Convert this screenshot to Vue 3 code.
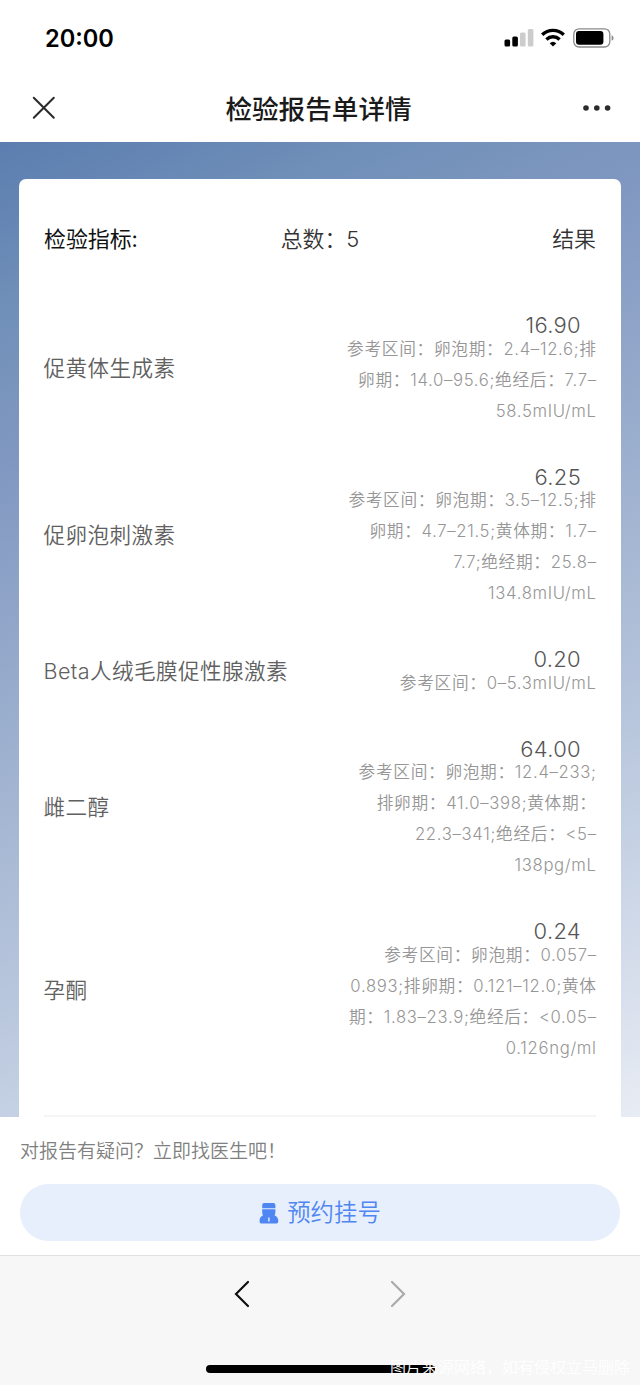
<template>
  <div class="page">
    <header class="status-bar">
      <span class="time">20:00</span>
      <div class="status-icons">
        <svg width="30" height="20" viewBox="0 0 30 20">
          <rect x="0.5" y="11.5" width="5.6" height="7" rx="1.5" fill="#000" />
          <rect x="8.3" y="8.5" width="5.6" height="10" rx="1.5" fill="#000" />
          <rect x="16" y="4.6" width="5.6" height="13.9" rx="1.5" fill="#ccc" />
          <rect x="23.8" y="1" width="5.6" height="17.5" rx="1.5" fill="#ccc" />
        </svg>
        <svg width="26" height="20" viewBox="0 0 26 20" class="wifi">
          <path d="M2.2 6.7a15.6 15.6 0 0 1 21.6 0" />
          <path d="M6.4 11.4a9.6 9.6 0 0 1 13.2 0" />
          <path d="M13 18.6l-3.3-3.3a4.8 4.8 0 0 1 6.6 0z" class="wifi-dot" />
        </svg>
        <svg width="42" height="20" viewBox="0 0 42 20">
          <rect x="0.8" y="0.8" width="36" height="18.2" rx="5.2" fill="none" stroke="#8a8a8a" stroke-width="1.3" />
          <rect x="3" y="3" width="27.4" height="13.8" rx="3" fill="#000" />
          <path d="M38.6 7.2c2.6 1 2.6 4.6 0 5.6z" fill="#8a8a8a" />
        </svg>
      </div>
    </header>

    <nav class="nav-bar">
      <svg width="24" height="24" viewBox="0 0 24 24" class="close">
        <path d="M1.8 1.8l20 20M21.8 1.8l-20 20" />
      </svg>
      <h1>检验报告单详情</h1>
      <svg width="28" height="6" viewBox="0 0 28 6" fill="#2c2c2c">
        <circle cx="3" cy="3" r="2.8" />
        <circle cx="13.8" cy="3" r="2.8" />
        <circle cx="24.6" cy="3" r="2.8" />
      </svg>
    </nav>

    <main class="content">
      <section class="card">
        <div class="card-head">
          <span class="head-title">检验指标:</span>
          <span class="head-count">总数：5</span>
          <span class="head-result">结果</span>
        </div>
        <ul class="list">
          <li v-for="item in items" :key="item.name" class="row">
            <span class="name">{{ item.name }}</span>
            <div class="result">
              <span class="value">{{ item.value }}</span>
              <p v-for="line in item.range" :key="line" class="range">{{ line }}</p>
            </div>
          </li>
        </ul>
      </section>
    </main>

    <section class="ask">
      <p>对报告有疑问？立即找医生吧！</p>
      <button class="book">
        <svg width="20" height="22" viewBox="0 0 20 22" fill="#4f86f2">
          <path d="M3.2 6.2V3q0-2 2-2h9.2q2 0 2 2v3.2z" />
          <path d="M3.2 7.2h13.200v2.600q0 2.200-.8 3.600 3.600 1.400 3.600 4.800v1.600q0 1.600-1.600 1.600H2.200q-1.600 0-1.600-1.600v-1.600q0-3.400 3.400-4.800Q3.200 12 3.200 9.800z" />
          <path d="M9.200 15.4h1.400v4H9.200z" fill="#e7effd" />
        </svg>
        <span>预约挂号</span>
      </button>
    </section>

    <footer class="toolbar">
      <div class="arrows">
        <svg width="16" height="28" viewBox="0 0 16 28" stroke="#111">
          <path d="M14 2L2 14l12 12" />
        </svg>
        <svg width="16" height="28" viewBox="0 0 16 28" stroke="#aaa">
          <path d="M2 2l12 12L2 26" />
        </svg>
      </div>
      <div class="home-indicator"></div>
      <span class="watermark">图片来源网络，如有侵权立马删除</span>
    </footer>
  </div>
</template>

<script setup>
const items = [
  {
    name: '促黄体生成素',
    value: '16.90',
    range: ['参考区间：卵泡期：2.4–12.6;排', '卵期：14.0–95.6;绝经后：7.7–', '58.5mIU/mL'],
  },
  {
    name: '促卵泡刺激素',
    value: '6.25',
    range: ['参考区间：卵泡期：3.5–12.5;排', '卵期：4.7–21.5;黄体期：1.7–', '7.7;绝经期：25.8–', '134.8mIU/mL'],
  },
  {
    name: 'Beta人绒毛膜促性腺激素',
    value: '0.20',
    range: ['参考区间：0–5.3mIU/mL'],
  },
  {
    name: '雌二醇',
    value: '64.00',
    range: ['参考区间：卵泡期：12.4–233;', '排卵期：41.0–398;黄体期：', '22.3–341;绝经后：<5–', '138pg/mL'],
  },
  {
    name: '孕酮',
    value: '0.24',
    range: ['参考区间：卵泡期：0.057–', '0.893;排卵期：0.121–12.0;黄体', '期：1.83–23.9;绝经后：<0.05–', '0.126ng/ml'],
  },
];
</script>

<style>
body {
  margin: 0;
}
</style>

<style scoped>
.page {
  width: 640px;
  height: 1385px;
  display: flex;
  flex-direction: column;
  overflow: hidden;
  background: #fff;
  font-family: Inter, "Noto Sans CJK SC", sans-serif;
  font-weight: 350;
}

p,
h1,
ul {
  margin: 0;
  padding: 0;
}

svg {
  display: block;
  flex: none;
}

.status-bar {
  height: 76px;
  padding: 0 25.5px 0 45px;
  box-sizing: border-box;
  display: flex;
  align-items: center;
  justify-content: space-between;
}

.time {
  font-size: 23.6px;
  font-weight: 600;
}

.status-icons {
  display: flex;
  align-items: center;
  gap: 6.5px;
}

.wifi path {
  fill: none;
  stroke: #000;
  stroke-width: 3.4;
}

.wifi .wifi-dot {
  fill: #000;
  stroke: none;
}

.nav-bar {
  height: 66px;
  padding: 0 29px 2px 32px;
  box-sizing: border-box;
  display: flex;
  align-items: center;
  justify-content: space-between;
}

.close path {
  stroke: #2a2a2a;
  stroke-width: 2;
  stroke-linecap: round;
}

h1 {
  margin-left: -2px;
  padding-top: 1px;
  font-size: 26.6px;
  line-height: 40px;
  font-weight: 500;
  color: #1a1a1a;
}

.content {
  height: 975px;
  padding: 37px 19px 0;
  box-sizing: border-box;
  overflow: hidden;
  background: linear-gradient(156deg, #5b7eb0 0%, #7190b9 14%, #8299c2 27%, #9eb1cf 49%, #c4d0e3 77%, #e8ecf4 100%);
}

.card {
  height: 938px;
  padding: 0 25px;
  box-sizing: border-box;
  display: flex;
  flex-direction: column;
  background: #fff;
  border-radius: 7px 7px 0 0;
}

.card-head {
  height: 114px;
  padding-top: 44px;
  box-sizing: border-box;
  display: grid;
  grid-template-columns: 1fr 1fr 1fr;
  font-size: 21.9px;
  line-height: 32px;
  color: #333;
}

.head-title {
  color: #111;
  font-weight: 400;
}

.head-count {
  text-align: center;
}

.head-result {
  text-align: right;
}

.list {
  flex: 1;
  list-style: none;
  border-bottom: 2px solid #f5f5f5;
}

.row {
  padding: 25px 0 18px;
  display: flex;
  align-items: center;
  justify-content: space-between;
  white-space: nowrap;
}

.name {
  margin-left: -0.5px;
  padding-bottom: 11px;
  font-size: 21.6px;
  letter-spacing: 0.4px;
  color: #606060;
}

.result {
  display: flex;
  flex-direction: column;
  align-items: flex-end;
}

.value {
  padding-right: 15px;
  font-size: 22px;
  line-height: 15.8px;
  letter-spacing: 0.3px;
  color: #555;
}

.range {
  margin-right: -0.7px;
  font-size: 16.7px;
  line-height: 30.9px;
  letter-spacing: 0.68px;
  color: #969696;
}

.ask {
  height: 138px;
  padding: 20px 20px 0;
  box-sizing: border-box;
  font-size: 19px;
  line-height: 30px;
  color: #808080;
}

.book {
  width: 600px;
  height: 57px;
  margin-top: 17px;
  padding: 0;
  border: none;
  border-radius: 29px;
  display: flex;
  align-items: center;
  justify-content: center;
  gap: 8px;
  background: #e7effd;
  color: #4f86f2;
  font: inherit;
  font-size: 23.4px;
}

.toolbar {
  position: relative;
  height: 130px;
  box-sizing: border-box;
  border-top: 1px solid #e2e2e2;
  background: #f7f7f7;
  display: flex;
  flex-direction: column;
  align-items: center;
  justify-content: space-between;
  padding: 24px 0 12px;
}

.arrows {
  display: flex;
  gap: 140px;
}

.arrows path {
  fill: none;
  stroke-width: 2.2;
  stroke-linecap: round;
}

.home-indicator {
  width: 229px;
  height: 8px;
  border-radius: 4px;
  background: #000;
}

.watermark {
  position: absolute;
  right: 10px;
  bottom: 6px;
  font-size: 16px;
  line-height: 24px;
  color: #fff;
}
</style>
